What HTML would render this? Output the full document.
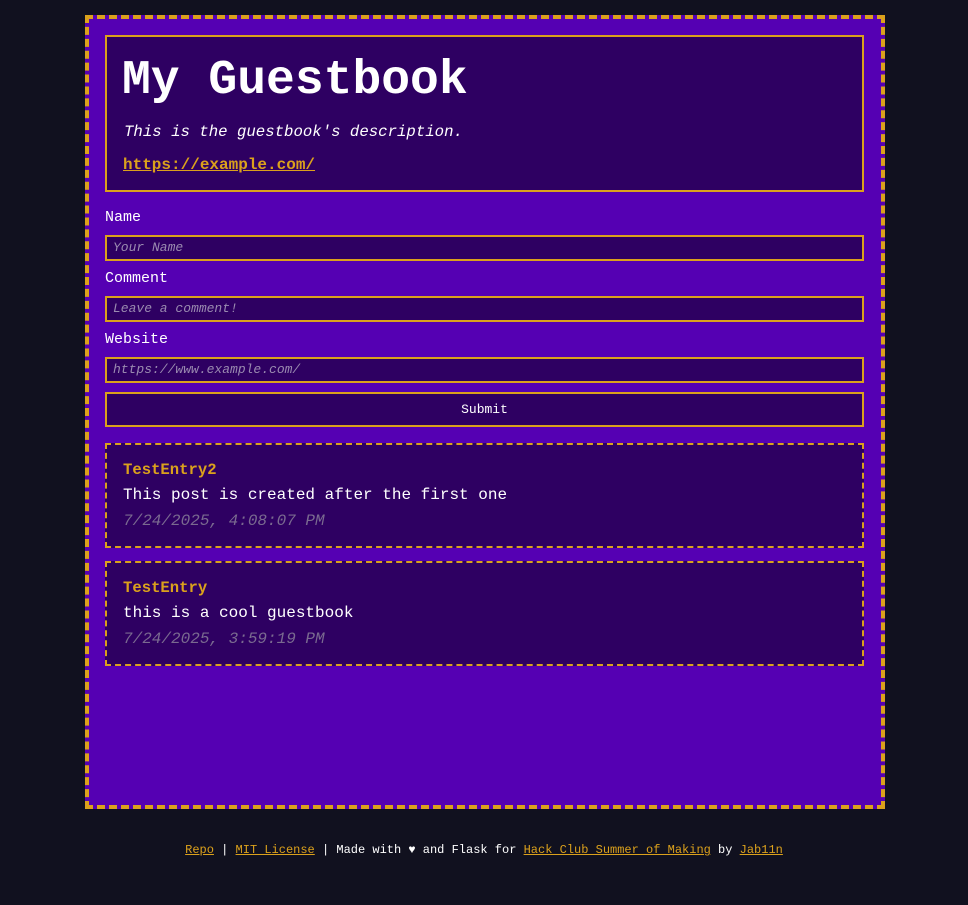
<!DOCTYPE html>
<html><head><meta charset="utf-8"><style>
html,body{margin:0;padding:0}
body{width:968px;height:905px;background:#11111f;font-family:"Liberation Mono",monospace;color:#fff;position:relative;overflow:hidden}
.main{position:absolute;left:85px;top:15px;width:792px;height:786px;border:4px dashed #dba11c;background:#5500b3}
.hdr{position:absolute;left:16px;top:16px;width:755px;height:153px;border:2px solid #dba11c;background:#2e0062}
h1{margin:0;position:absolute;left:15px;top:20px;font-size:48px;font-weight:bold;line-height:48px}
.desc{position:absolute;left:17px;top:86px;font-style:italic;font-size:15.7px}
.lnk{position:absolute;left:16px;top:119px;font-size:16px;font-weight:bold;color:#dba11c;text-decoration:underline}
.lbl{position:absolute;left:16px;font-size:15px}
.inp{position:absolute;left:16px;width:749px;height:22px;border:2px solid #dba11c;background:#2e0062;font-size:13px;font-style:italic;color:#9a8ab0;line-height:22px;padding-left:6px;box-sizing:content-box}
.btn{position:absolute;left:16px;top:373px;width:755px;height:31px;border:2px solid #dba11c;background:#2e0062;font-size:13px;text-align:center;line-height:31px}
.ent{position:absolute;left:16px;width:755px;height:101px;border:2px dashed #dba11c;background:#2e0062}
.ent .n{position:absolute;left:16px;top:16px;color:#dba11c;font-weight:bold;font-size:15.6px}
.ent .b{position:absolute;left:16px;top:41px;font-size:16px}
.ent .d{position:absolute;left:16px;top:67px;font-size:16px;font-style:italic;color:#7a6a90}
.foot{position:absolute;left:0;width:968px;top:843px;text-align:center;font-size:12px}
.foot a{color:#dba11c;text-decoration:underline}
</style></head><body>
<div class="main">
 <div class="hdr">
  <h1>My Guestbook</h1>
  <div class="desc">This is the guestbook's description.</div>
  <div class="lnk">https://example.com/</div>
 </div>
 <div class="lbl" style="top:190px">Name</div>
 <div class="inp" style="top:216px">Your Name</div>
 <div class="lbl" style="top:251px">Comment</div>
 <div class="inp" style="top:277px">Leave a comment!</div>
 <div class="lbl" style="top:312px">Website</div>
 <div class="inp" style="top:338px">https://www.example.com/</div>
 <div class="btn">Submit</div>
 <div class="ent" style="top:424px"><div class="n">TestEntry2</div><div class="b">This post is created after the first one</div><div class="d">7/24/2025, 4:08:07 PM</div></div>
 <div class="ent" style="top:542px"><div class="n">TestEntry</div><div class="b">this is a cool guestbook</div><div class="d">7/24/2025, 3:59:19 PM</div></div>
</div>
<div class="foot"><a>Repo</a> | <a>MIT License</a> | Made with ♥ and Flask for <a>Hack Club Summer of Making</a> by <a>Jab11n</a></div>
</body></html>
